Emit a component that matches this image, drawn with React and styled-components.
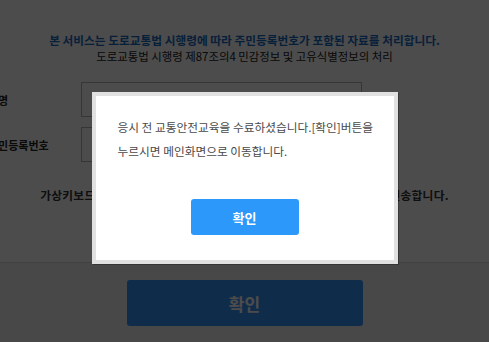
import React from "react";
import styled, { createGlobalStyle } from "styled-components";

const GlobalStyle = createGlobalStyle`
  html, body {
    margin: 0;
    padding: 0;
    background: #fff;
  }
  body {
    font-family: "Noto Sans CJK KR", "Noto Sans", sans-serif;
  }
  * {
    box-sizing: border-box;
  }
`;

const App = () => {
  return (
    <>
      <GlobalStyle />
      <Page>
        <Notice>
          <NoticeLine $accent>
            본 서비스는 도로교통법 시행령에 따라 주민등록번호가 포함된 자료를 처리합니다.
          </NoticeLine>
          <NoticeLine>도로교통법 시행령 제87조의4 민감정보 및 고유식별정보의 처리</NoticeLine>
        </Notice>

        <Form>
          <Row>
            <Label>성명</Label>
            <Input />
          </Row>
          <Row>
            <Label>주민등록번호</Label>
            <Input />
          </Row>
        </Form>

        <KeyboardNote>
          가상키보드를 사용하여 입력하신 주민등록번호는 암호화되어 안전하게 전송합니다.
        </KeyboardNote>

        <Footer>
          <SubmitButton>확인</SubmitButton>
        </Footer>

        <Overlay>
          <Modal>
            <Message>
              응시 전 교통안전교육을 수료하셨습니다.[확인]버튼을
              <br />
              누르시면 메인화면으로 이동합니다.
            </Message>
            <ModalButton>확인</ModalButton>
          </Modal>
        </Overlay>
      </Page>
    </>
  );
};

export default App;

const Page = styled.div`
  position: relative;
  width: 100%;
  height: 342px;
  display: flex;
  flex-direction: column;
  background: #fff;
  overflow: hidden;
`;

const Notice = styled.div`
  padding-top: 31px;
  text-align: center;
`;

const NoticeLine = styled.p`
  margin: 0;
  font-size: ${(p) => (p.$accent ? "11.7px" : "11.4px")};
  line-height: 17px;
  font-weight: ${(p) => (p.$accent ? 700 : 400)};
  color: ${(p) => (p.$accent ? "#1a6cc4" : "#222")};
  white-space: nowrap;
`;

const Form = styled.div`
  display: flex;
  flex-direction: column;
  gap: 10px;
  margin: 17px 0 0 -12px;
`;

const Row = styled.div`
  display: grid;
  grid-template-columns: 93px 281px;
  align-items: center;
  height: 35px;
`;

const Label = styled.span`
  font-size: 11px;
  font-weight: 700;
  color: #222;
  white-space: nowrap;
`;

const Input = styled.div`
  height: 35px;
  border: 1px solid #b5b5b5;
  background: #fff;
`;

const KeyboardNote = styled.p`
  margin: 24px 0 0;
  font-size: 11.7px;
  line-height: 17px;
  font-weight: 700;
  color: #333;
  text-align: center;
  white-space: nowrap;
  letter-spacing: 0.3px;
`;

const Footer = styled.div`
  margin-top: auto;
  height: 80px;
  display: flex;
  justify-content: center;
  padding-top: 17px;
  background: #f0f0f0;
  border-top: 1px solid #dcdcdc;
`;

const SubmitButton = styled.button`
  width: 236px;
  height: 46px;
  border: none;
  border-radius: 3px;
  background: #3393fa;
  color: #fff;
  font-family: inherit;
  font-size: 17px;
  font-weight: 700;
`;

const Overlay = styled.div`
  position: absolute;
  inset: 0;
  background: rgba(0, 0, 0, 0.7);
  display: flex;
  justify-content: center;
  align-items: flex-start;
  padding-top: 92px;
`;

const Modal = styled.div`
  width: 306px;
  border: 4px solid #e1e1e1;
  background: #fff;
  padding: 19px 22px 25px;
  box-shadow: 1px 1px 0 rgba(0, 0, 0, 0.25);
  display: flex;
  flex-direction: column;
`;

const Message = styled.p`
  margin: 0;
  font-size: 11.7px;
  line-height: 24px;
  color: #4a4a4a;
  white-space: nowrap;
`;

const ModalButton = styled.button`
  align-self: center;
  width: 108px;
  height: 36px;
  margin-top: 36px;
  border: none;
  border-radius: 3px;
  background: #2c98fa;
  color: #fff;
  font-family: inherit;
  font-size: 13px;
  font-weight: 700;
`;
